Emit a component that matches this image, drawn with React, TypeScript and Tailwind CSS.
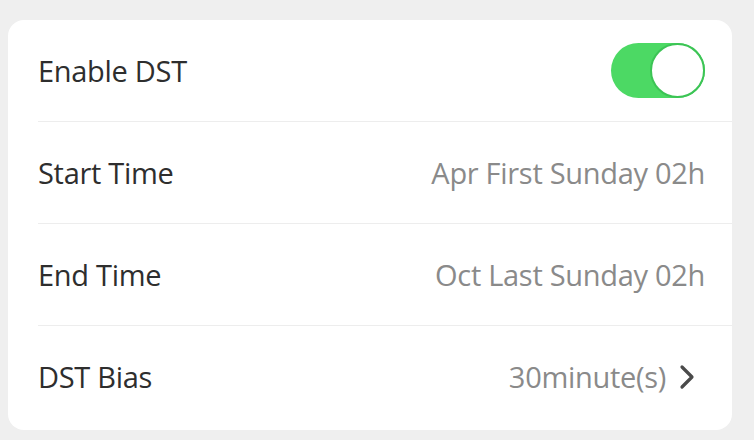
import React from "react";

function Row({ label, children, last }: { label: string; children: React.ReactNode; last?: boolean }) {
  return (
    <div className={`flex h-[102px] items-center justify-between pr-[27px] ${last ? "" : "border-b border-[#ededed]"}`}>
      <span className="text-[#2e2e2e]">{label}</span>
      {children}
    </div>
  );
}

export default function App() {
  return (
    <div
      className="h-[440px] w-[754px] bg-[#efefef] pl-[8px] pr-[22px] pt-[20px]"
      style={{ fontFamily: '"Open Sans", "Noto Sans", sans-serif' }}
    >
      <div className="h-[410px] rounded-[16px] bg-white pl-[30px] text-[29px] tracking-[-0.3px]">
        <Row label="Enable DST">
          <div className="relative h-[55px] w-[94px] rounded-full bg-[#4cd964]">
            <div className="absolute right-0 top-0 h-[55px] w-[55px] rounded-full border-2 border-[#3cc455] bg-white" />
          </div>
        </Row>
        <Row label="Start Time">
          <span className="text-[#8a8a8a]">Apr First Sunday 02h</span>
        </Row>
        <Row label="End Time">
          <span className="text-[#8a8a8a]">Oct Last Sunday 02h</span>
        </Row>
        <Row label="DST Bias" last>
          <div className="flex items-center gap-[13px]">
            <span className="text-[#8a8a8a]">30minute(s)</span>
            <svg width="16" height="26" viewBox="0 0 16 26" fill="none" className="mr-[10px]">
              <path d="M3 3 L13 13 L3 23" stroke="#4a4a4a" strokeWidth="3.2" strokeLinecap="round" strokeLinejoin="round" />
            </svg>
          </div>
        </Row>
      </div>
    </div>
  );
}
